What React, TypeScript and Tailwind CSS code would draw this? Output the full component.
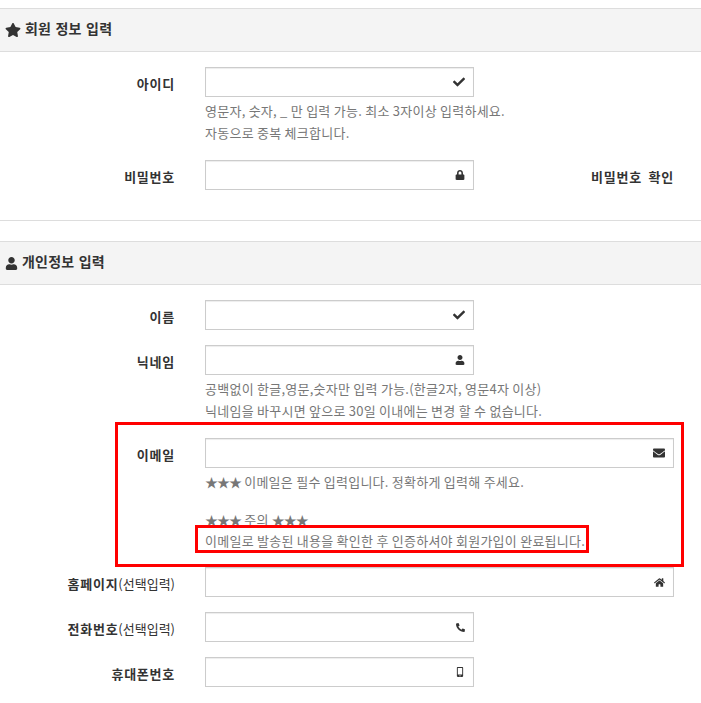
import { FaCheck, FaEnvelope, FaHome, FaLock, FaMobileAlt, FaPhoneAlt, FaStar, FaUser } from "react-icons/fa";
import type { ReactNode } from "react";

function Label({ children }: { children: ReactNode }) {
	return <label className="w-[175px] shrink-0 pt-[7px] text-right text-[13px] leading-[20px] font-bold tracking-[0.75px] text-[#333]">{children}</label>;
}

function Field({ icon, wide }: { icon: ReactNode; wide?: boolean }) {
	return (
		<div className={`${wide ? "w-[469px]" : "w-[269px]"} flex h-[30px] items-center justify-end border border-[#ccc] pr-[8px] text-[#333] shadow-[inset_0_1px_1px_rgba(0,0,0,0.075)]`}>
			{icon}
		</div>
	);
}

function Row({ label, icon, wide, children, after }: { label: ReactNode; icon: ReactNode; wide?: boolean; children?: ReactNode; after?: ReactNode }) {
	return (
		<div className="mb-[15px] flex">
			<Label>{label}</Label>
			<div className="ml-[30px]">
				<Field icon={icon} wide={wide} />
				{children && <div className="mt-[3px] mb-[1px] text-[13px] leading-[22px] tracking-[0.25px] whitespace-nowrap text-[#777]">{children}</div>}
			</div>
			{after}
		</div>
	);
}

function Header({ icon, children }: { icon: ReactNode; children: ReactNode }) {
	return (
		<h2 className="flex h-[44px] items-center gap-[4px] border-y border-[#ddd] bg-[#f4f4f4] pl-[5px] text-[14px] font-bold tracking-[0.2px] [word-spacing:1px] text-[#333]">
			{icon}
			<span className="pb-[4px]">{children}</span>
		</h2>
	);
}

function Stars() {
	return <span className="tracking-[-1px]">★★★</span>;
}

const optional = <span className="font-normal tracking-normal">(선택입력)</span>;

export default function App() {
	return (
		<div className="relative h-[703px] overflow-hidden bg-white pt-[8px] font-['Noto_Sans_CJK_KR',sans-serif]">
			<Header icon={<FaStar className="size-[16px]" />}>회원 정보 입력</Header>
			<div className="pt-[15px]">
				<Row label="아이디" icon={<FaCheck className="size-[12px]" />}>
					<p>영문자, 숫자, _ 만 입력 가능. 최소 3자이상 입력하세요.</p>
					<p>자동으로 중복 체크합니다.</p>
				</Row>
				<Row
					label="비밀번호"
					icon={<FaLock className="size-[10px]" />}
					after={<span className="ml-auto pt-[7px] pr-[27px] text-[13px] leading-[20px] font-bold tracking-[0.75px] [word-spacing:3px] text-[#333]">비밀번호 확인</span>}
				/>
			</div>
			<div className="mt-[30px] mb-[20px] border-t border-[#ddd]" />
			<Header icon={<FaUser className="size-[13px]" />}>개인정보 입력</Header>
			<div className="pt-[15px]">
				<Row label="이름" icon={<FaCheck className="size-[12px]" />} />
				<Row label="닉네임" icon={<FaUser className="size-[10px]" />}>
					<p>공백없이 한글,영문,숫자만 입력 가능.(한글2자, 영문4자 이상)</p>
					<p>닉네임을 바꾸시면 앞으로 30일 이내에는 변경 할 수 없습니다.</p>
				</Row>
				<Row label="이메일" icon={<FaEnvelope className="size-[12px]" />} wide>
					<p><Stars /> 이메일은 필수 입력입니다. 정확하게 입력해 주세요.</p>
					<p className="mt-[16px] leading-[21px]"><Stars /> 주의 <Stars /></p>
					<p className="mb-[1px] leading-[21px]">이메일로 발송된 내용을 확인한 후 인증하셔야 회원가입이 완료됩니다.</p>
				</Row>
				<Row label={<>홈페이지{optional}</>} icon={<FaHome className="size-[11px]" />} wide />
				<Row label={<>전화번호{optional}</>} icon={<FaPhoneAlt className="size-[9px]" />} />
				<Row label="휴대폰번호" icon={<FaMobileAlt className="size-[10px]" />} />
			</div>
			<div className="absolute top-[422px] left-[115px] h-[145px] w-[569px] border-[3px] border-[#f00]" />
			<div className="absolute top-[525px] left-[195px] h-[28px] w-[394px] border-[3px] border-[#f00]" />
		</div>
	);
}
